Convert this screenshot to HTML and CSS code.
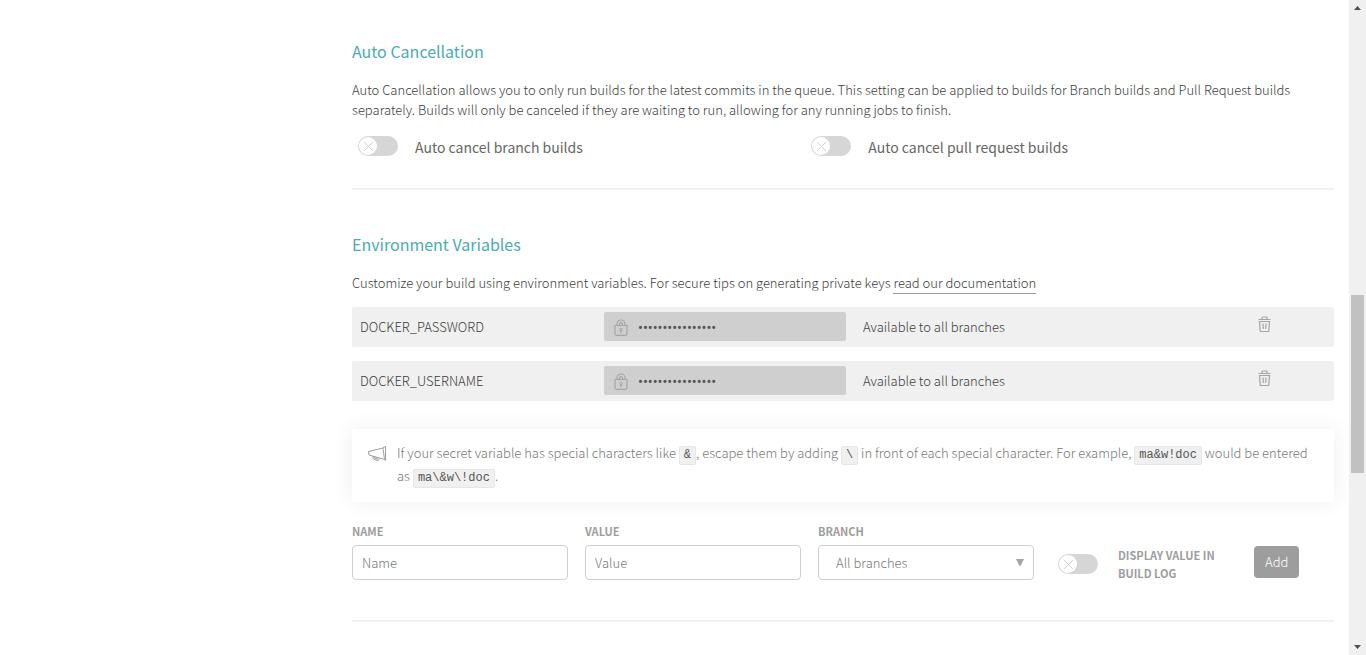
FILE: index.html
```html
<!DOCTYPE html>
<html lang="en">
<head>
<meta charset="utf-8">
<meta name="viewport" content="width=device-width, initial-scale=1">
<title>Settings</title>
<link rel="stylesheet" href="styles.css">
</head>
<body>
<svg class="sprite" aria-hidden="true">
  <symbol id="knob" viewBox="0 0 40 20"><circle cx="10" cy="10" r="9" fill="#fff"/><path d="M6 6l9 9M15 6l-9 9" stroke="#d0d0d0" fill="none"/></symbol>
  <symbol id="lock" viewBox="0 0 14 17"><path d="M1 6.500h12v8q0 1.800-1.800 1.800H2.800Q1 16.300 1 14.500zM3 6.500V5a4 4 0 0 1 8 0v1.500M5.500 6.500V5.200a1.500 1.500 0 0 1 3 0v1.300zM7 12v2.200" fill="none" stroke="#a5a5a5" stroke-width="1.200"/><circle cx="7" cy="10.500" r="1.300" fill="none" stroke="#a5a5a5"/></symbol>
  <symbol id="trash" viewBox="0 0 13 16"><path d="M.5 3.500h12M4 3V1.800Q4 1 4.800 1h3.400Q9 1 9 1.800V3M1.500 5.500h10l-.8 10H2.300zM5 7.500l.3 5.500M8 7.500L7.700 13" fill="none" stroke="#a5a5a5" stroke-width="1.200"/></symbol>
</svg>
<div class="page">
  <main class="content">
    <section class="section">
      <h2 class="heading">Auto Cancellation</h2>
      <p class="text">Auto Cancellation allows you to only run builds for the latest commits in the queue. This setting can be applied to builds for Branch builds and Pull Request builds separately. Builds will only be canceled if they are waiting to run, allowing for any running jobs to finish.</p>
      <div class="switches">
        <label class="switch"><span class="toggle"><input class="toggle-input" type="checkbox"><svg class="toggle-knob" aria-hidden="true"><use href="#knob"/></svg></span><span class="switch-label">Auto cancel branch builds</span></label>
        <label class="switch"><span class="toggle"><input class="toggle-input" type="checkbox"><svg class="toggle-knob" aria-hidden="true"><use href="#knob"/></svg></span><span class="switch-label">Auto cancel pull request builds</span></label>
      </div>
    </section>
    <section class="section">
      <h2 class="heading">Environment Variables</h2>
      <p class="text">Customize your build using environment variables. For secure tips on generating private keys <a class="link" href="#docs">read our documentation</a></p>
      <ul class="vars">
        <li class="var">
          <span class="var-name">DOCKER_PASSWORD</span>
          <span class="var-value"><svg class="lock" aria-hidden="true"><use href="#lock"/></svg><span class="dots">••••••••••••••••</span></span>
          <span class="var-branch">Available to all branches</span>
          <button class="remove" type="button" aria-label="Delete DOCKER_PASSWORD"><svg class="trash" aria-hidden="true"><use href="#trash"/></svg></button>
        </li>
        <li class="var">
          <span class="var-name">DOCKER_USERNAME</span>
          <span class="var-value"><svg class="lock" aria-hidden="true"><use href="#lock"/></svg><span class="dots">••••••••••••••••</span></span>
          <span class="var-branch">Available to all branches</span>
          <button class="remove" type="button" aria-label="Delete DOCKER_USERNAME"><svg class="trash" aria-hidden="true"><use href="#trash"/></svg></button>
        </li>
      </ul>
      <div class="notice">
        <svg class="megaphone" viewBox="0 0 19 16" aria-hidden="true"><path d="M.5 5.500L15 2l1.500 11.500L1 9zM15 1.500l2.500-1v14l-1-1M5 10.300l.3 2.700 4.800 1.700 1.200-2.300M6.500 10.800l.3 1.200 3 1" fill="none" stroke="#9d9d9d" stroke-linejoin="round"/></svg>
        <p class="notice-text">If your secret variable has special characters like <code class="code">&amp;</code>, escape them by adding <code class="code">\</code> in front of each special character. For example, <code class="code">ma&amp;w!doc</code> would be entered as <code class="code">ma\&amp;w\!doc</code>.</p>
      </div>
      <form class="form">
        <div class="field"><label class="label" for="name">NAME</label><input class="control" id="name" type="text" placeholder="Name"></div>
        <div class="field"><label class="label" for="value">VALUE</label><input class="control" id="value" type="text" placeholder="Value"></div>
        <div class="field"><label class="label" for="branch">BRANCH</label>
          <div class="select-box"><select class="control select" id="branch"><option>All branches</option></select><svg class="caret" viewBox="0 0 8 8" aria-hidden="true"><path d="M0 0h8L4.500 7h-1z" fill="#a5a5a5"/></svg></div>
        </div>
        <label class="log"><span class="toggle"><input class="toggle-input" type="checkbox"><svg class="toggle-knob" aria-hidden="true"><use href="#knob"/></svg></span><span class="label">DISPLAY VALUE IN BUILD LOG</span></label>
        <button class="add" type="button">Add</button>
      </form>
    </section>
  </main>
  <div class="scrollbar" aria-hidden="true">
    <svg class="arrow" viewBox="0 0 17 17"><path d="M5 10l3.500-4L12 10z" fill="#505050"/></svg>
    <div class="thumb"></div>
    <svg class="arrow" viewBox="0 0 17 17"><path d="M5 7l3.500 4L12 7z" fill="#505050"/></svg>
  </div>
</div>
</body>
</html>
```
FILE: styles.css
```css
* { box-sizing: border-box; }
body {
  margin: 0;
  background: #fff;
  color: #3c3c3c;
  font: 300 13px/20px "Noto Sans CJK SC", "Noto Sans", sans-serif;
}
.sprite { display: none; }
.page { display: flex; min-height: 100vh; }
.content { flex: 1; min-width: 0; padding: 0 15px 0 352px; }
.section { padding: 38px 0 30px; border-bottom: 2px solid #f1f1f1; }
.section + .section { padding: 41px 0 38px; }
.heading { margin: 0 0 16px; color: #4aabb3; font-size: 16px; line-height: 26px; font-weight: 400; }
.text { margin: 0; }
.link { padding-bottom: 1px; border-bottom: 1px solid #999; color: inherit; text-decoration: none; }

.switches { display: grid; grid-template-columns: 6fr 7fr; padding: 16px 0 0; }
.switch { display: flex; align-items: flex-start; gap: 17px; padding-left: 6px; }
.switch-label { color: #666; font-size: 14px; line-height: 22px; font-weight: 400; }
.toggle { display: grid; flex: none; width: 40px; height: 20px; }
.toggle-input { appearance: none; grid-area: 1 / 1; margin: 0; border-radius: 10px; background: #d6d6d6; cursor: pointer; }
.toggle-knob { grid-area: 1 / 1; width: 40px; height: 20px; pointer-events: none; }

.vars { display: grid; gap: 14px; margin: 14px 0 28px; padding: 0; list-style: none; }
.var { display: grid; grid-template-columns: 252fr 242fr 412fr 76fr; align-items: center; height: 40px; border-radius: 2px; background: #f0f0f0; }
.var-name { padding-left: 8px; }
.var-value { display: flex; align-self: start; align-items: center; gap: 10px; height: 29px; margin-top: 5px; padding-left: 10px; border-radius: 2px; background: #cfcfcf; }
.lock { width: 14px; height: 17px; margin-top: 2px; }
.dots { color: #555; font: 13px/20px "Noto Sans", sans-serif; }
.var-branch { padding-left: 17px; }
.remove { justify-self: start; align-self: start; margin-top: 9px; padding: 0; border: 0; background: none; cursor: pointer; }
.trash { display: block; width: 13px; height: 16px; }

.notice { display: flex; gap: 10px; padding: 13px 16px 14px; box-shadow: 0 0 20px rgba(0, 0, 0, .07); color: #777; }
.megaphone { flex: none; width: 19px; height: 16px; margin-top: 4px; }
.notice-text { margin: 0; line-height: 22px; }
.code { display: inline-block; padding: 1px 4px; border: 1px solid #e6e6e6; border-radius: 2px; background: #f0f0f0; color: #555; font: 12px/15px "Liberation Mono", monospace; }

.form { display: grid; grid-template-columns: 216fr 216fr 216fr 186fr 80fr; align-items: start; gap: 17px; margin-top: 20px; }
.field { display: grid; gap: 5px; min-width: 0; }
.label { color: #9d9d9d; font-size: 11px; line-height: 18px; font-weight: 600; }
.control { width: 100%; height: 35px; padding: 0 9px; border: 1px solid #cfcfcf; border-radius: 4px; background: #fff; color: #777; font: inherit; }
.control::placeholder { color: #777; }
.select-box { position: relative; }
.select { appearance: none; display: block; padding: 0 17px; }
.caret { position: absolute; top: 14px; right: 10px; width: 8px; height: 8px; pointer-events: none; }
.log { display: flex; gap: 20px; align-items: center; margin-top: 24px; padding-left: 7px; }
.add { justify-self: start; height: 32px; margin-top: 24px; padding: 0 11px; border: 0; border-radius: 4px; background: #9d9d9d; color: #fff; font: inherit; cursor: pointer; }

.scrollbar { display: grid; grid-template-rows: 17px 278fr 178fr 165fr 17px; flex: none; width: 17px; height: 100vh; background: #f0f0f0; }
.arrow { width: 17px; height: 17px; }
.arrow:last-child { grid-row: 5; }
.thumb { grid-row: 3; margin: 0 2px; background: #c1c1c1; }
```
